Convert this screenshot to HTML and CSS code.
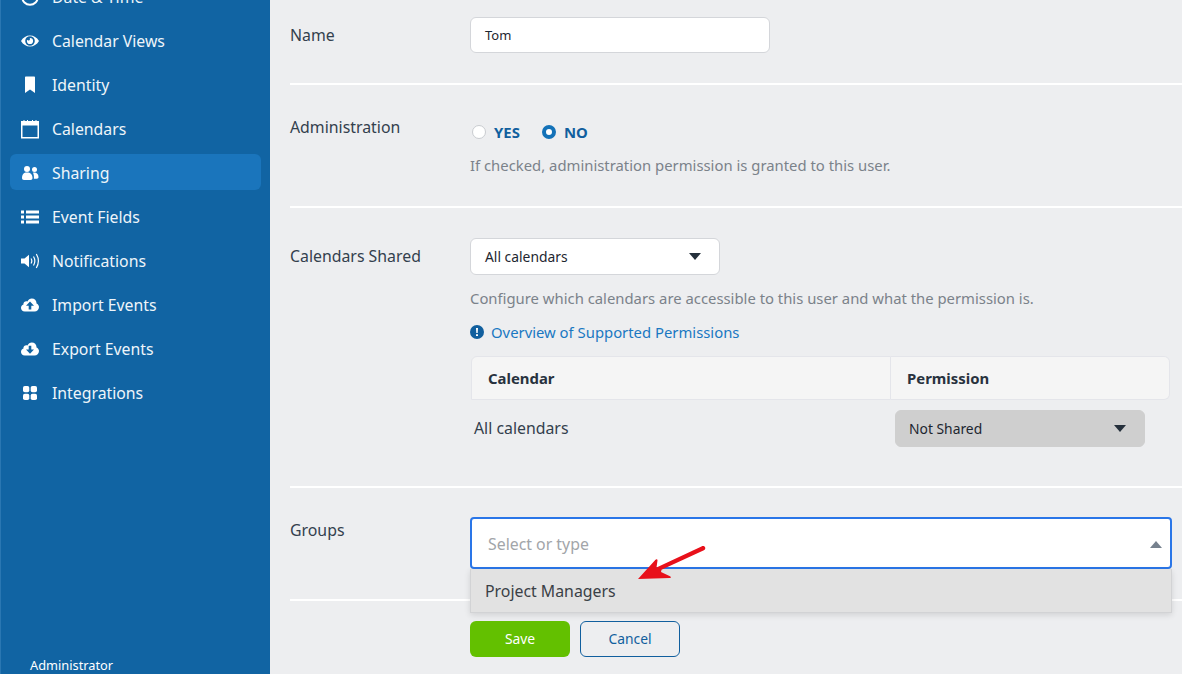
FILE: index.html
```html
<!DOCTYPE html>
<html lang="en">
<head>
<meta charset="utf-8">
<title>Sharing</title>
<link rel="stylesheet" href="styles.css">
</head>
<body>
<div class="app">
  <aside class="sidebar">
    <nav class="nav">
      <a class="nav-item"><svg class="nav-icon" viewBox="0 0 20 20"><circle cx="10" cy="10" r="7.8" fill="none" stroke="#fff" stroke-width="2"/><path d="M10 5v5l3 2" fill="none" stroke="#fff" stroke-width="1.6"/></svg><span>Date &amp; Time</span></a>
      <a class="nav-item"><svg class="nav-icon" viewBox="0 0 20 20"><path fill="#fff" fill-rule="evenodd" d="M1 10C3.2 6.4 6.3 4.5 10 4.5s6.800 1.900 9 5.500c-2.200 3.600-5.300 5.500-9 5.500S3.200 13.600 1 10zm4.200 0a4.800 4.800 0 1 0 9.600 0 4.800 4.800 0 0 0-9.600 0z"/><path fill="#fff" d="M10 6.900a3.100 3.100 0 1 1-3.100 3.100c0-.5.100-.9.300-1.300.3.500.8.800 1.300.8.900 0 1.500-.7 1.500-1.500 0-.3-.1-.7-.4-.9z"/></svg><span>Calendar Views</span></a>
      <a class="nav-item"><svg class="nav-icon" viewBox="0 0 20 20"><path fill="#fff" d="M5 2.500c0-.6.400-1 1-1h8c.6 0 1 .4 1 1v15.500l-5-3.500-5 3.500z"/></svg><span>Identity</span></a>
      <a class="nav-item"><svg class="nav-icon" viewBox="0 0 20 20"><path fill="#fff" fill-rule="evenodd" d="M1 2h2.500v-1h1v1h2.500v-1h1v1h4v-1h1v1h2.500v-1h1v1h2.500v17.500H1zm1.500 4.500v11.500h15V6.500z"/></svg><span>Calendars</span></a>
      <a class="nav-item is-active"><svg class="nav-icon" viewBox="0 0 20 20"><circle cx="7" cy="6" r="3" fill="#fff"/><circle cx="14.500" cy="6.500" r="2.500" fill="#fff"/><path fill="#fff" d="M2 15c0-3.500 1.500-5.500 5-5.500s5.500 2 5.500 5.500c0 1.300-.7 2-2 2H4c-1.300 0-2-.7-2-2z"/><path fill="#fff" d="M13 9.700c3.300-.5 5.500 1.100 5.500 4.300 0 1.100-.6 1.700-1.700 1.700h-2.900c.2-2.500-.1-4.500-.9-6z"/></svg><span>Sharing</span></a>
      <a class="nav-item"><svg class="nav-icon" viewBox="0 0 20 20"><path fill="#fff" d="M1 3.500h3v3H1zM6 3.500h13v3H6zM1 8.500h3v3H1zM6 8.500h13v3H6zM1 13.500h3v3H1zM6 13.500h13v3H6z"/></svg><span>Event Fields</span></a>
      <a class="nav-item"><svg class="nav-icon" viewBox="0 0 20 20"><path fill="#fff" d="M1 7.500h3.500L9 3.700v12.600l-4.500-3.800H1z"/><path fill="none" stroke="#fff" stroke-width="1.200" d="M11 7.500c1 1.500 1 3.500 0 5M13.500 5.500c1.800 3 1.800 6 0 9M16.300 3c2.700 4.500 2.700 9.500 0 14"/></svg><span>Notifications</span></a>
      <a class="nav-item"><svg class="nav-icon" viewBox="0 0 20 20"><path fill="#fff" fill-rule="evenodd" d="M4.800 16.500C2.500 16.500 1 14.900 1 13c0-1.600 1-2.900 2.500-3.400 0-.2-.1-.3-.1-.5 0-1.600 1.300-2.800 3-2.800.4 0 .8.100 1.100.2C8.400 4.500 9.900 3.500 11.800 3.500c2.700 0 4.700 1.900 4.700 4.400v.5c1.500.6 2.500 2 2.500 3.600 0 2.500-2 4.500-4.500 4.500zM10 6.500l-4 4.200h2.700v3.800h2.600v-3.800H14z"/></svg><span>Import Events</span></a>
      <a class="nav-item"><svg class="nav-icon" viewBox="0 0 20 20"><path fill="#fff" fill-rule="evenodd" d="M4.800 16.500C2.500 16.500 1 14.900 1 13c0-1.600 1-2.900 2.500-3.400 0-.2-.1-.3-.1-.5 0-1.600 1.300-2.800 3-2.800.4 0 .8.100 1.100.2C8.400 4.500 9.900 3.500 11.800 3.500c2.700 0 4.700 1.900 4.700 4.400v.5c1.500.6 2.500 2 2.500 3.600 0 2.500-2 4.500-4.500 4.500zM10 14.800l4-4.200h-2.700V6.800H8.700v3.800H6z"/></svg><span>Export Events</span></a>
      <a class="nav-item"><svg class="nav-icon" viewBox="0 0 20 20"><rect x="3" y="3" width="6.300" height="6.300" rx="1.800" fill="#fff"/><rect x="10.700" y="3" width="6.300" height="6.300" rx="1.800" fill="#fff"/><rect x="3" y="10.700" width="6.300" height="6.300" rx="1.800" fill="#fff"/><rect x="10.700" y="10.700" width="6.300" height="6.300" rx="1.800" fill="#fff"/></svg><span>Integrations</span></a>
    </nav>
    <div class="sidebar-user">Administrator</div>
  </aside>

  <main class="main">
    <section class="row row-name">
      <div class="label label-name">Name</div>
      <div class="field"><div class="input input-name">Tom</div></div>
    </section>

    <section class="row row-admin">
      <div class="label">Administration</div>
      <div class="field">
        <div class="radios">
          <span class="radio"></span><span class="radio-text">YES</span>
          <span class="radio is-on"></span><span class="radio-text">NO</span>
        </div>
        <p class="help help-admin">If checked, administration permission is granted to this user.</p>
      </div>
    </section>

    <section class="row row-cal">
      <div class="label label-cal">Calendars Shared</div>
      <div class="field">
        <div class="input input-select">All calendars<span class="caret"></span></div>
        <p class="help help-cal">Configure which calendars are accessible to this user and what the permission is.</p>
        <a class="overview"><svg class="info" viewBox="0 0 14 14"><circle cx="7" cy="7" r="7" fill="#115f9e"/><path fill="#fff" d="M6 3h2l-.3 5H6.300zM6 9.300h2v1.800H6z"/></svg>Overview of Supported Permissions</a>
        <div class="table">
          <div class="th th-cal">Calendar</div>
          <div class="th th-perm">Permission</div>
          <div class="td">All calendars</div>
          <div class="td-select"><div class="input input-perm">Not Shared<span class="caret"></span></div></div>
        </div>
      </div>
    </section>

    <section class="row row-groups">
      <div class="label label-groups">Groups</div>
      <div class="field field-groups">
        <div class="combo">Select or type<span class="caret caret-up"></span></div>
        <div class="menu">Project Managers</div>
      </div>
    </section>

    <div class="actions">
      <button class="btn btn-save">Save</button>
      <button class="btn btn-cancel">Cancel</button>
    </div>
  </main>
</div>
<svg class="arrow" viewBox="0 0 80 46" aria-hidden="true"><path fill="#e8101a" d="M65.500 3.500c1.200-.7 3-.5 3.600.8.500 1.200 0 2.300-1.200 3L25.500 26.800l-.5 2.300 9 4.100c1.200.6 1.100 1.800-.3 1.900L2 36l17.500-19.300c1-.9 2-.6 2 .8l-1 7z"/></svg>
</body>
</html>
```
FILE: styles.css
```css
* { box-sizing: border-box; }
html, body { margin: 0; height: 100%; overflow: hidden; }
body { font-family: "Noto Sans", "Open Sans", sans-serif; background: #edeef0; color: #2a3440; }

.app { display: flex; height: 674px; overflow: hidden; }

.sidebar {
  width: 270px; flex: none; display: flex; flex-direction: column;
  background: #1164a3; border-left: 1px solid #2a77b2; color: #fff; overflow: hidden;
}
.nav { display: flex; flex-direction: column; gap: 8px; margin-top: -22px; padding: 0 9px; }
.nav-item {
  display: flex; align-items: center; gap: 12px; height: 36px; padding: 2px 10px 0;
  font-size: 15.800px; color: #eef5fa; border-radius: 6px;
}
.nav-item.is-active { background: #1a75bc; }
.nav-icon { width: 20px; height: 20px; flex: none; }
.sidebar-user { margin-top: auto; padding: 0 0 0 29px; height: 18px; font-size: 12.800px; line-height: 18px; }

.main { flex: 1; min-width: 0; padding-left: 20px; display: flex; flex-direction: column; }

.row { display: flex; border-bottom: 2px solid #fff; }
.label { width: 180px; flex: none; font-size: 15.850px; line-height: 20px; color: #33404d; }
.field { flex: 1; min-width: 0; }

.row-name { height: 85px; padding-top: 17px; }
.label-name { padding-top: 8px; }
.row-admin { height: 123px; padding-top: 32px; }
.row-cal { height: 280px; padding-top: 30px; }
.label-cal { padding-top: 8px; }
.row-groups { height: 113px; padding-top: 29px; }
.label-groups { padding-top: 3px; }

.input {
  display: flex; align-items: center; justify-content: space-between;
  background: #fff; border: 1px solid #d4d6da; border-radius: 6px;
  font-size: 13.850px; color: #1d2630; padding: 0 14px;
}
.input-name { width: 300px; height: 36px; font-size: 13px; }
.input-select { width: 250px; height: 37px; padding-right: 18px; }
.input-perm { width: 250px; height: 37px; background: #cfcfcf; border-color: #cfcfcf; padding-right: 18px; padding-left: 13px; }

.caret { width: 0; height: 0; border-left: 6px solid transparent; border-right: 6px solid transparent; border-top: 7px solid #25303c; }
.caret-up { border-top: 0; border-bottom: 7px solid #76818e; }

.radios { display: flex; align-items: center; height: 20px; margin-top: 5px; padding-left: 2px; }
.radio { width: 14px; height: 14px; border-radius: 50%; background: #fff; border: 1px solid #c9ccd0; }
.radio.is-on { border: 4px solid #1472b8; }
.radio-text { font-size: 14.900px; font-weight: 700; color: #115f9e; margin: 0 22px 0 8px; }
.help { margin: 0; font-size: 14.850px; line-height: 20px; color: #7b828a; }
.help-admin { margin-top: 13px; }
.help-cal { margin-top: 13px; }

.overview { display: flex; align-items: center; gap: 7px; margin-top: 14px; font-size: 14.850px; line-height: 20px; color: #1a78c2; }
.info { width: 14px; height: 14px; flex: none; }

.table { display: grid; grid-template-columns: 420px 279px; width: 699px; margin: 14px 0 0 1px; }
.th {
  height: 44px; display: flex; align-items: center; font-size: 14.900px; font-weight: 700; color: #28323e;
  background: #f5f5f5; border: 1px solid #e4e5ea;
}
.th-cal { padding-left: 16px; border-radius: 6px 0 0 0; }
.th-perm { padding-left: 16px; border-left: 0; border-radius: 0 6px 6px 0; }
.td { display: flex; align-items: center; height: 56px; padding: 0 0 0 3px; font-size: 15.850px; color: #33404d; }
.td-select { padding: 10px 0 0 4px; }

.field-groups { position: relative; padding-right: 10px; }
.combo {
  display: flex; align-items: center; justify-content: space-between; height: 52px;
  background: #fff; border: 2px solid #2a76e8; border-radius: 4px; padding: 2px 8px 0 16px;
  font-size: 15.850px; color: #a2a5a9;
}
.menu {
  position: absolute; left: 0; right: 10px; top: 52px; height: 44px; display: flex; align-items: center;
  padding-left: 14px; background: #e2e2e2; border: 1px solid #d2d3d5; border-top: 0; font-size: 15.850px; color: #3a4046;
  box-shadow: 0 2px 6px rgba(0,0,0,.12);
}

.actions { display: flex; gap: 10px; padding: 20px 0 0 180px; }
.btn { width: 100px; height: 36px; padding: 0 0 2px; border-radius: 6px; font: 400 13.850px "Noto Sans", sans-serif; }
.btn-save { background: #63c000; border: 0; color: #fff; }
.btn-cancel { background: transparent; border: 1px solid #115f9e; color: #115f9e; }

.arrow { position: absolute; left: 636px; top: 543px; width: 80px; height: 46px; }
```
